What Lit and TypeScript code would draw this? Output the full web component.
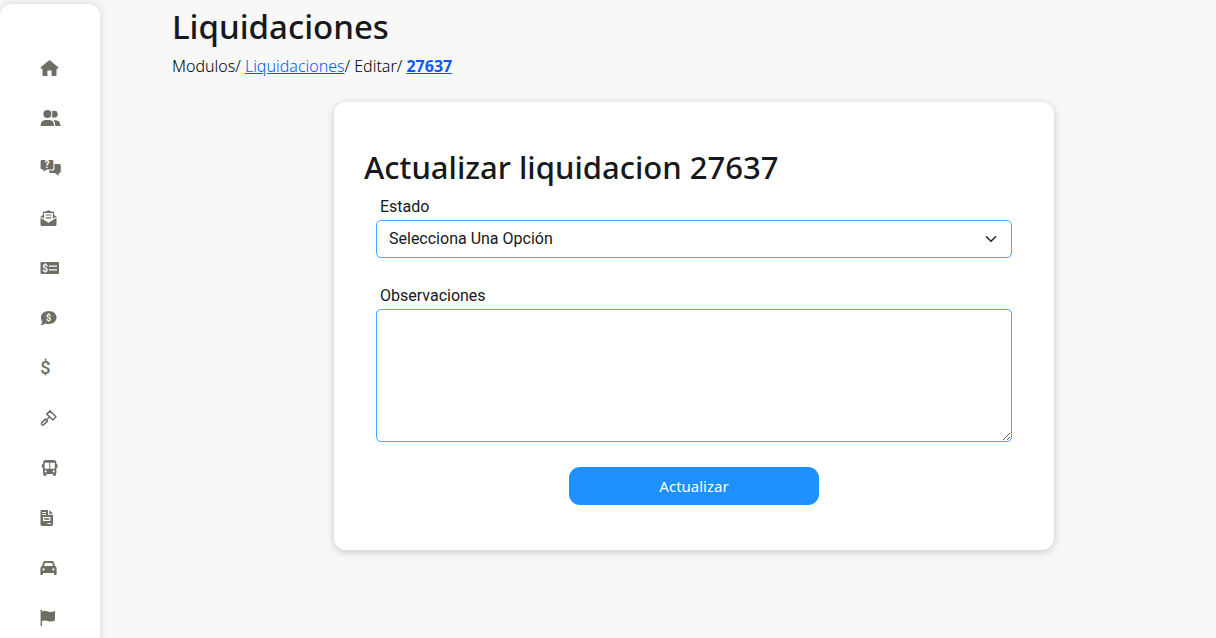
import { LitElement, html, svg, css } from "lit";
import { customElement } from "lit/decorators.js";

const icons = [
  {
    label: "Inicio",
    art: svg`<path d="M9.5 2 L18.6 9.6 L17.8 10.7 H16.5 V17 Q16.5 18 15.5 18 H11.6 V12.6 H7.4 V18 H3.5 Q2.5 18 2.5 17 V10.7 H1.2 L.4 9.6Z"/>`,
  },
  {
    label: "Usuarios",
    art: svg`<circle cx="14.3" cy="6.2" r="3.4"/>
      <path d="M14 11.9 Q20.6 12 20.6 18 H15Z"/>
      <circle class="gap" cx="7.4" cy="6" r="5"/>
      <path class="gap" d="M0 18 Q0 11 7.4 11 Q15.4 11 15.4 18Z"/>
      <circle cx="7.4" cy="6" r="4"/>
      <path d="M.6 18 Q.8 12 5.4 12 H9.4 Q13.9 12 14.2 18Z"/>`,
  },
  {
    label: "Consultas",
    art: svg`<path d="M14.4 6 H19.3 Q20.8 6 20.8 7.5 V13.6 Q20.8 15 19.3 15 H18.7 V17.8 L14.6 15 H10.5 Q9 15 9 13.6 V12.6 H12.8 Q14.4 12.6 14.4 11Z"/>
      <path d="M2 2 H12 Q13.4 2 13.4 3.4 V10 Q13.4 11.4 12 11.4 H6.6 L3.5 13.8 V11.4 H2 Q.6 11.4 .6 10 V3.4 Q.6 2 2 2Z"/>
      <text class="gap" x="7" y="10.2" font-size="10" text-anchor="middle">?</text>`,
  },
  {
    label: "Correo",
    art: svg`<path d="M3 7 V4.6 Q3 3.6 4 3.6 H6.2 L8.5 2 L10.8 3.6 H13 Q14 3.6 14 4.6 V7 L16.5 8.6 V16.6 Q16.5 18 15.1 18 H1.9 Q.5 18 .5 16.6 V8.6Z"/>
      <path class="gap" d="M4 5 H13 V11.2 L8.5 14 L4 11.2Z"/>
      <path class="gap" d="M.5 8.4 L8.5 13.4 L16.5 8.4 V9.8 L8.5 14.8 L.5 9.8Z"/>
      <path d="M5.6 6.4 H11.4 V7.6 H5.6Z M5.6 9.2 H11.4 V10.4 H5.6Z"/>`,
  },
  {
    label: "Pagos",
    art: svg`<rect x=".5" y="4" width="18.5" height="12" rx="1.2"/>
      <text class="gap" x="5" y="13.5" font-size="10" text-anchor="middle">$</text>
      <path class="gap" d="M9 7.4 H17 V8.8 H9Z M9 11.2 H17 V12.6 H9Z"/>`,
  },
  {
    label: "Cotizaciones",
    art: svg`<path d="M8.8 3 C13.1 3 16.6 5.8 16.6 9.6 S13.1 16 8.8 16 Q7 16 5.4 15.4 Q3.3 17 .6 17 Q2.2 15.3 2.3 13.4 Q.9 11.7 .9 9.6 C.9 5.8 4.5 3 8.8 3Z"/>
      <text class="gap" x="8.6" y="12.8" font-size="9" text-anchor="middle">$</text>`,
  },
  {
    label: "Liquidaciones",
    art: svg`<text class="glyph" x="5.4" y="16" font-size="18" text-anchor="middle">$</text>`,
  },
  {
    label: "Subastas",
    art: svg`<g class="line"><path d="M10 2.9 L15.9 8.8 L12.7 12 L6.8 6.1Z M6.9 11.5 L9.2 9.3"/>
      <path d="M5.4 11.1 L7.4 13.1 L3.8 16.6 Q2.7 17.4 1.8 16.6 Q1 15.7 1.8 14.6Z"/></g>`,
  },
  {
    label: "Transporte",
    art: svg`<path d="M6 2 H13.4 Q16.4 2.2 16.4 4.8 V6 Q17.6 6 17.6 7.4 V9 Q17.6 10 16.4 10 V15.6 H15.9 V17 Q15.9 18 14.4 18 Q13 18 13 17 V16 H6.4 V17 Q6.4 18 5 18 Q3.5 18 3.5 17 V15.6 H3 V10 Q1.8 10 1.8 9 V7.4 Q1.8 6 3 6 V4.8 Q3 2.2 6 2Z"/>
      <path class="gap" d="M4.6 4.8 H9.2 V10.8 H4.6Z M10.2 4.8 H14.8 V10.8 H10.2Z"/>
      <circle class="gap" cx="5.7" cy="13.4" r="1.1"/><circle class="gap" cx="13.7" cy="13.4" r="1.1"/>`,
  },
  {
    label: "Documentos",
    art: svg`<path d="M2 2 H8 V6.8 H13 V16.6 Q13 18 11.6 18 H2 Q.5 18 .5 16.6 V3.4 Q.5 2 2 2Z M9.2 2 L13 5.8 H9.2Z"/>
      <path class="gap" d="M2.3 4 H6 V5 H2.3Z M2.3 6.1 H6 V7.1 H2.3Z M3 9 H10.5 V13 H3Z M7.5 15 H11 V16 H7.5Z"/>
      <path d="M4.2 10.2 H9.3 V11.8 H4.2Z"/>`,
  },
  {
    label: "Vehículos",
    art: svg`<path d="M5 3 H12 Q13.3 3 13.8 4.2 L15 8 Q16.6 8.8 16.6 10.3 V16.2 Q16.6 17 15.8 17 H14.8 Q14 17 14 16.2 V15 H3 V16.2 Q3 17 2.2 17 H1.2 Q.4 17 .4 16.2 V10.3 Q.4 8.8 2 8 L3.2 4.2 Q3.7 3 5 3Z"/>
      <path class="gap" d="M5 4.9 H12 L13.1 8 H3.9Z"/>
      <circle class="gap" cx="3.6" cy="11.4" r="1.1"/><circle class="gap" cx="13.4" cy="11.4" r="1.1"/>`,
  },
  {
    label: "Reportes",
    art: svg`<path d="M.6 2 H2 V3.4 Q5.2 2.2 8 3.4 Q11.2 4.6 15 3 V12.6 Q11.4 14.3 8 13 Q5 11.9 2 13 V18 H.6Z"/>`,
  },
];

@customElement("app-sidebar")
class AppSidebar extends LitElement {
  static styles = css`
    :host {
      display: block;
      box-sizing: border-box;
      padding: 39px 0 0 40px;
      background: #fff;
      border-radius: 12px 12px 0 0;
      box-shadow: 0 0 10px rgba(0, 0, 0, 0.15);
    }
    .list {
      display: flex;
      flex-direction: column;
      margin: 0;
      padding: 0;
      list-style: none;
    }
    .link {
      display: flex;
      align-items: center;
      height: 50px;
      color: #6f6e64;
    }
    .icon {
      width: 24px;
      height: 20px;
      fill: currentColor;
      font-family: Roboto, sans-serif;
      font-weight: 700;
    }
    .glyph {
      font-weight: 500;
    }
    .gap {
      fill: #fff;
    }
    .line {
      fill: none;
      stroke: currentColor;
      stroke-width: 1.5;
      stroke-linejoin: round;
    }
  `;

  render() {
    return html`<nav aria-label="Principal">
      <ul class="list">
        ${icons.map(
          (i) => html`<li>
            <a class="link" href="#" aria-label=${i.label}>
              <svg class="icon" viewBox="0 0 24 20" aria-hidden="true">${i.art}</svg>
            </a>
          </li>`
        )}
      </ul>
    </nav>`;
  }
}

@customElement("app-root")
class AppRoot extends LitElement {
  static styles = css`
    :host {
      display: grid;
      grid-template-columns: 100px minmax(0, 1fr);
      column-gap: 72px;
      box-sizing: border-box;
      height: 100vh;
      padding-top: 4px;
      overflow: hidden;
      background: #f8f8f8;
      color: #16181b;
      font: 400 15px/24px "Noto Sans", "Open Sans", sans-serif;
    }
    .main {
      padding-top: 4px;
    }
    .title,
    .subtitle {
      margin: 0 0 8px;
      font-weight: 500;
      line-height: 38px;
    }
    .title {
      font-size: 33px;
    }
    .subtitle {
      font-size: 31px;
    }
    .crumbs {
      color: #000;
      font-size: 16px;
      font-weight: 300;
    }
    .crumbs a {
      color: #0a58f5;
    }
    .crumbs .current {
      font-weight: 700;
    }
    .card {
      box-sizing: border-box;
      max-width: 720px;
      margin: 24px auto 0;
      padding: 46px 30px 45px;
      background: #fff;
      border-radius: 12px;
      box-shadow: 0 2px 8px rgba(0, 0, 0, 0.2);
    }
    .form {
      display: flex;
      flex-direction: column;
      gap: 25px;
      padding: 0 12px;
    }
    .field {
      display: grid;
      row-gap: 1px;
      padding-top: 1px;
      font: 400 16px/24px Roboto, sans-serif;
    }
    .label {
      padding-left: 4px;
    }
    .box {
      display: grid;
      align-items: center;
    }
    .control {
      box-sizing: border-box;
      width: 100%;
      margin: 0;
      padding: 6px 12px;
      border: 1px solid #4da6ff;
      border-radius: 5px;
      background: #fff;
      color: inherit;
      font: inherit;
    }
    .select {
      grid-area: 1 / 1;
      height: 38px;
      appearance: none;
    }
    .area {
      display: block;
      height: 133px;
      resize: vertical;
    }
    .chevron {
      grid-area: 1 / 1;
      justify-self: end;
      width: 16px;
      height: 12px;
      margin-right: 13px;
      fill: none;
      stroke: #212529;
      stroke-width: 2;
      stroke-linecap: round;
      stroke-linejoin: round;
      pointer-events: none;
    }
    .submit {
      align-self: center;
      width: 250px;
      max-width: 100%;
      height: 38px;
      padding: 0;
      border: 0;
      border-radius: 11px;
      background: #1e90ff;
      color: #fff;
      font: inherit;
    }
  `;

  render() {
    return html`
      <app-sidebar></app-sidebar>
      <main class="main">
        <h1 class="title">Liquidaciones</h1>
        <nav class="crumbs" aria-label="Ruta">
          Modulos/ <a href="#">Liquidaciones</a>/ Editar/
          <a class="current" href="#">27637</a>
        </nav>
        <section class="card">
          <h2 class="subtitle">Actualizar liquidacion 27637</h2>
          <form class="form" @submit=${(e: Event) => e.preventDefault()}>
            <div class="field">
              <label class="label" for="estado">Estado</label>
              <div class="box">
                <select class="control select" id="estado">
                  <option>Selecciona Una Opción</option>
                </select>
                <svg class="chevron" viewBox="0 0 16 16" aria-hidden="true">
                  <path d="m2 5 6 6 6-6" />
                </svg>
              </div>
            </div>
            <div class="field">
              <label class="label" for="observaciones">Observaciones</label>
              <textarea class="control area" id="observaciones"></textarea>
            </div>
            <button class="submit" type="submit">Actualizar</button>
          </form>
        </section>
      </main>
    `;
  }
}
